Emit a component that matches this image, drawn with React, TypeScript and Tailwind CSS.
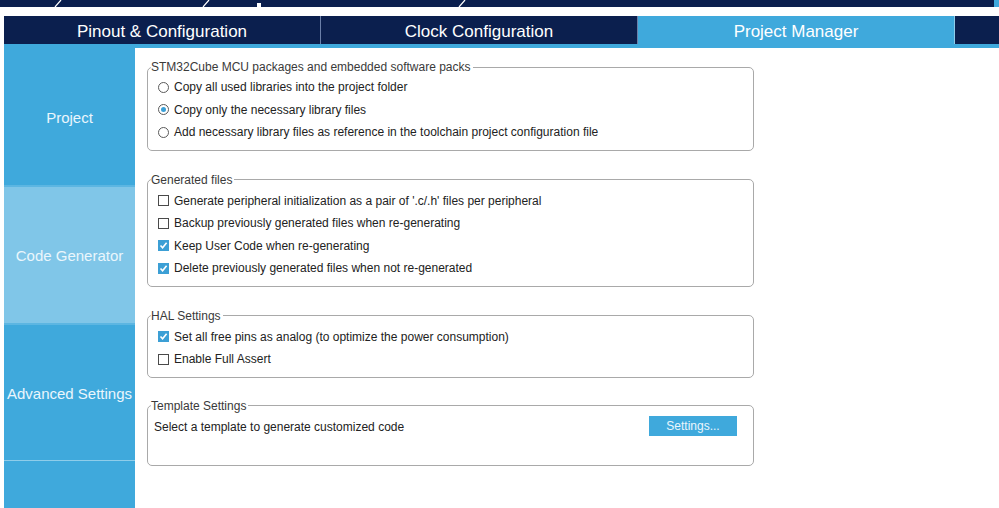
import { ReactNode } from 'react';

const font = { fontFamily: '"Liberation Sans", Arial, sans-serif' };

function Radio({ checked }: { checked?: boolean }) {
  return (
    <span className="w-[11px] h-[11px] rounded-full border border-[#5a5a5a] bg-white flex items-center justify-center shrink-0">
      {checked && <span className="w-[5px] h-[5px] rounded-full bg-[#3a9fd6]" />}
    </span>
  );
}

function Check({ checked }: { checked?: boolean }) {
  if (checked) {
    return (
      <span className="w-[11px] h-[11px] bg-[#3c9fd5] flex items-center justify-center shrink-0">
        <svg width="9" height="9" viewBox="0 0 9 9">
          <path d="M1.5 4.5 L3.6 6.8 L7.6 1.8" stroke="white" strokeWidth="1.6" fill="none" />
        </svg>
      </span>
    );
  }
  return <span className="w-[11px] h-[11px] border border-[#4a4a4a] bg-white shrink-0" />;
}

function Row({ icon, label }: { icon: ReactNode; label: string }) {
  return (
    <div className="flex items-center gap-[5px] h-[22.5px]">
      {icon}
      <span>{label}</span>
    </div>
  );
}

function Group({ title, children, className, inner }: { title: string; children: ReactNode; className?: string; inner?: string }) {
  return (
    <fieldset className={`border border-[#a9a9a9] rounded-[5px] w-[607px] ${className ?? ''}`}>
      <legend className="ml-[3px] pr-[2px] text-[#3a3a3a] leading-[14px]">{title}</legend>
      <div className={inner}>{children}</div>
    </fieldset>
  );
}

export default function App() {
  return (
    <div className="w-[999px] h-[508px] bg-white overflow-hidden flex flex-col text-[12px] text-[#222]" style={font}>
      {/* top strip */}
      <div className="h-[7px] bg-[#0b1f4e] relative shrink-0">
        <svg width="999" height="7" className="absolute inset-0">
          <path d="M55 7 L61 0 M203 7 L209 0 M459 7 L465 0" stroke="white" strokeWidth="1.2" />
          <rect x="257" y="3" width="4" height="4" fill="white" />
          <rect x="994" y="0" width="5" height="7" fill="#3fa9dc" />
        </svg>
      </div>
      <div className="h-[9px] shrink-0" />

      {/* tabs */}
      <div className="flex h-[28px] shrink-0 pl-[4px] text-[17px] text-white">
        <div className="w-[317px] bg-[#0b1f4e] flex items-center justify-center pt-[3px] border-r border-[#6b7fa8]">
          Pinout &amp; Configuration
        </div>
        <div className="w-[317px] bg-[#0b1f4e] flex items-center justify-center pt-[3px] border-r border-[#6b7fa8]">
          Clock Configuration
        </div>
        <div className="w-[317px] bg-[#3fa9dc] flex items-center justify-center pt-[3px] border-r border-[#8fcdea]">
          Project Manager
        </div>
        <div className="flex-1 bg-[#0b1f4e]" />
      </div>
      <div className="h-[4px] bg-[#3fa9dc] ml-[4px] shrink-0" />

      <div className="flex flex-1 min-h-0">
        {/* sidebar */}
        <div className="w-[131px] ml-[4px] flex flex-col text-[15px] text-[#eaf6fc] shrink-0">
          <div className="h-[137px] bg-[#3fa9dc] flex items-center justify-center pt-[3px]">Project</div>
          <div className="h-[2px] bg-[#5cb6e2]" />
          <div className="h-[136px] bg-[#80c6e8] flex items-center justify-center pt-[3px]">Code Generator</div>
          <div className="h-[2px] bg-[#5cb6e2]" />
          <div className="h-[135px] bg-[#3fa9dc] flex items-center justify-center pt-[4px]">Advanced Settings</div>
          <div className="h-[1px] bg-[#8fcdea]" />
          <div className="flex-1 bg-[#3fa9dc]" />
        </div>

        {/* content */}
        <div className="flex flex-col pl-[12px] pt-[12px]">
          <Group title="STM32Cube MCU packages and embedded software packs" inner="pl-[10px] pt-[2px] pb-[6px]">
            <Row icon={<Radio />} label="Copy all used libraries into the project folder" />
            <Row icon={<Radio checked />} label="Copy only the necessary library files" />
            <Row icon={<Radio />} label="Add necessary library files as reference in the toolchain project configuration file" />
          </Group>

          <Group title="Generated files" className="mt-[22px]" inner="pl-[10px] pt-[3px] pb-[6px]">
            <Row icon={<Check />} label="Generate peripheral initialization as a pair of '.c/.h' files per peripheral" />
            <Row icon={<Check />} label="Backup previously generated files when re-generating" />
            <Row icon={<Check checked />} label="Keep User Code when re-generating" />
            <Row icon={<Check checked />} label="Delete previously generated files when not re-generated" />
          </Group>

          <Group title="HAL Settings" className="mt-[22px]" inner="pl-[10px] pt-[3px] pb-[6px]">
            <Row icon={<Check checked />} label="Set all free pins as analog (to optimize the power consumption)" />
            <Row icon={<Check />} label="Enable Full Assert" />
          </Group>

          <Group title="Template Settings" className="mt-[21px]" inner="pl-[6px] pr-[16px] pt-[3px] pb-[27px]">
            <div className="flex items-start justify-between">
              <div className="h-[22px] flex items-center">Select a template to generate customized code</div>
              <div className="w-[88px] h-[20px] bg-[#3fa9dc] text-[#eaf6fc] flex items-center justify-center">
                Settings...
              </div>
            </div>
          </Group>
        </div>
      </div>
    </div>
  );
}
